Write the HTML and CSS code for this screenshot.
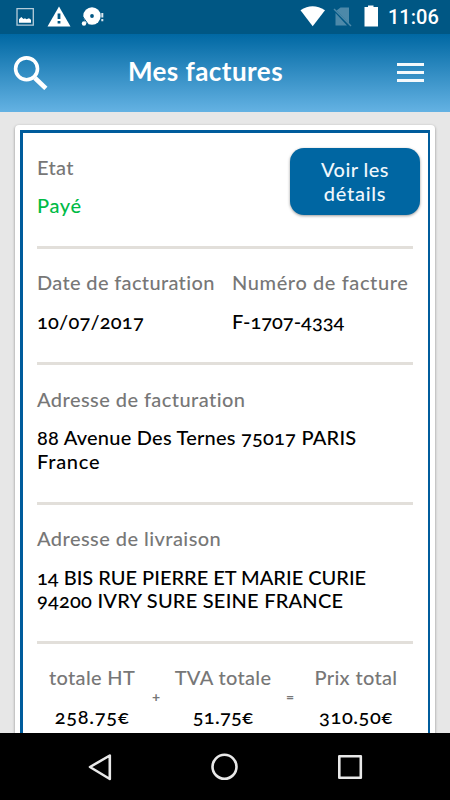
FILE: index.html
```
<!DOCTYPE html>
<html lang="fr">
<head>
<meta charset="utf-8">
<title>Mes factures</title>
<link rel="stylesheet" href="styles.css">
</head>
<body>
<div class="status">
  <svg class="status-left" width="110" height="34" viewBox="0 0 110 34">
    <path d="M17 8.700h16.300v16.400H17z" fill="none" stroke="#b5ccd9" stroke-width="1.300"/>
    <path d="M19 22.700v-3.500l2.300-2.200 2.200 2 1.500-.7 1.500 1 2.500-1 2 1.500v2.900z" fill="#fff"/>
    <path d="M59 6.500l11.500 20h-23z" fill="#fff"/>
    <path d="M59 13.500v5.500M59 21v2.500" stroke="#005784" stroke-width="2.800"/>
    <circle cx="92" cy="16" r="8.700" fill="#fff"/><circle cx="92" cy="16" r="1.900" fill="#005784"/>
    <path d="M83 17l5 7" stroke="#005784" stroke-width="1"/>
    <circle cx="84" cy="23.500" r="2.200" fill="#fff"/>
    <path d="M102.300 13v4.500M102.300 19v2.200" stroke="#dce7ee" stroke-width="2"/>
  </svg>
  <svg class="status-right" width="90" height="34" viewBox="0 0 90 34">
    <path d="M.5 10.300Q12.500 2 25 10.300L12.700 26.300z" fill="#fff"/>
    <path d="M40.500 7.500H49V23.500L36.500 10.500z M35.500 13V25.500H47z" fill="#4d89a9"/>
    <path d="M34 9l17 17" stroke="#4d89a9" stroke-width="1.500"/>
    <path d="M64.500 7H68V5.500h5.500V7H78v19.500H64.500z" fill="#fff"/>
  </svg>
  <span class="clock">11:06</span>
</div>
<header class="bar">
  <svg class="search" width="36" height="36" viewBox="0 0 36 36" fill="none" stroke="#fff">
    <circle cx="14.600" cy="14.800" r="11" stroke-width="3.600"/><path d="M23 24l11 10.500" stroke-width="4.600"/>
  </svg>
  <h1>Mes factures</h1>
  <div class="menu"><i></i><i></i><i></i></div>
</header>
<main>
  <article class="card"><div class="invoice">
    <section class="first">
      <div><p class="label s4">Etat</p><p class="value paid s6">Payé</p></div>
      <button><span class="s5">Voir les</span><span class="s7">détails</span></button>
    </section>
    <section class="pair">
      <div><p class="label s4">Date de facturation</p><p class="value s2">10/07/2017</p></div>
      <div><p class="label s6">Numéro de facture</p><p class="value">F-1707-4334</p></div>
    </section>
    <section>
      <p class="label s5">Adresse de facturation</p>
      <p class="value s2">88 Avenue Des Ternes 75017 PARIS</p><p class="line s7">France</p>
    </section>
    <section>
      <p class="label s5">Adresse de livraison</p>
      <p class="value">14 BIS RUE PIERRE ET MARIE CURIE</p><p class="line s2">94200 IVRY SURE SEINE FRANCE</p>
    </section>
    <section class="totals">
      <div class="ht"><p class="label s4">totale HT</p><p class="value s7">258.75€</p></div>
      <b>+</b>
      <div class="tva"><p class="label s4">TVA totale</p><p class="value s4">51.75€</p></div>
      <b>=</b>
      <div class="total"><p class="label s4">Prix total</p><p class="value s6">310.50€</p></div>
    </section>
  </div></article>
</main>
<nav>
  <svg width="450" height="67" viewBox="0 0 450 67" fill="none" stroke="#e8e8e8" stroke-width="2.600" stroke-linejoin="round">
    <path d="M109.800 22.500v23.500L90 34z"/><circle cx="224.500" cy="33.800" r="12"/><path d="M339.300 23.300h21.500v21.500h-21.500z"/>
  </svg>
</nav>
</body>
</html>
```
FILE: styles.css
```
* { box-sizing: border-box; margin: 0; padding: 0; }
body {
  width: 450px; height: 800px; overflow: hidden;
  display: flex; flex-direction: column;
  background: #e7e7e7;
  font: 500 20px/23.3px Lato, sans-serif;
  font-feature-settings: "onum";
}
.status { height: 34px; flex: none; background: #005784; display: flex; }
.status-left { margin-right: 100px; }
.status-right { margin-left: 90px; }
.clock { font: 500 20px/35px Roboto, sans-serif; color: #fff; margin-left: -2px; letter-spacing: 0; }
.bar {
  height: 78px; flex: none;
  background: linear-gradient(#0068a3, #64b2e3);
  display: flex; align-items: flex-start;
}
.search { margin: 20px 0 0 12px; }
h1 { font-size: 26px; line-height: 30px; font-weight: 700; color: #fff; margin: 22px 0 0 80px; width: 270px; letter-spacing: .45px; }
.menu { width: 27px; height: 19px; margin: 29px 26px 0 auto; flex: none; display: flex; flex-direction: column; justify-content: space-between; }
.menu i { height: 3px; background: #f4f9fc; }
main { flex: 1; min-height: 0; overflow: hidden; padding: 13px 15px 0; }
.card { background: #fff; height: 750px; padding: 5px 5px 0; border-radius: 4px; box-shadow: 0 1px 3px rgba(0,0,0,.4); }
.invoice { height: 745px; border: solid #005c9c; border-width: 3px 2px 0 3px; padding: 0 15px 0 14px; }
section { border-bottom: 3px solid #e2dfda; padding: 22.700px 0 28.700px; white-space: nowrap; }
.first { display: flex; justify-content: space-between; height: 115.500px; }
.value { margin-top: 15.400px; color: #000; }
.label { color: #777; }
.line { color: #000; }
.paid { color: #00bb46; }
button {
  width: 130px; height: 67px; margin: -7.700px -7px 0 0;
  border: 0; border-radius: 14px; background: #0066a2; color: #f0f7fc;
  box-shadow: 0 1px 3px rgba(0,0,0,.4); font: inherit;
  display: flex; flex-direction: column; justify-content: center; align-items: center;
}
.pair { display: grid; grid-template-columns: 195px 1fr; }
.totals { display: flex; border: 0; text-align: center; padding-top: 22.200px; }
.ht { width: 111px; }
.tva { width: 117px; }
.total { width: 115px; }
.totals b { width: 18px; padding-top: 19px; font: 700 14px/23px Lato, sans-serif; color: #777; }
.s2 { letter-spacing: .23px; }
.s4 { letter-spacing: .34px; }
.s5 { letter-spacing: .44px; }
.s6 { letter-spacing: .6px; }
.s7 { letter-spacing: .75px; }
nav { height: 67px; flex: none; background: #000; }
```
